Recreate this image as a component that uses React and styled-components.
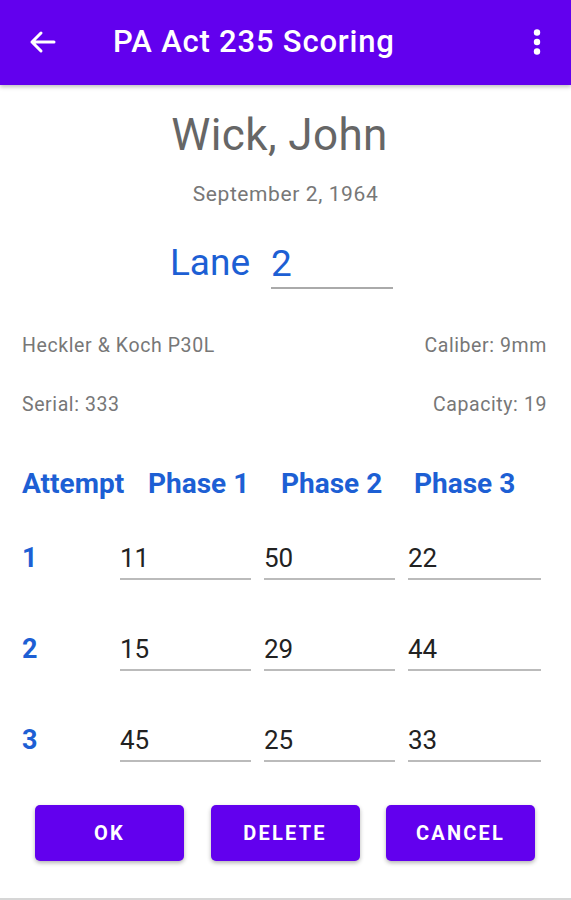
import React from 'react'
import styled, { createGlobalStyle } from 'styled-components'

const GlobalStyle = createGlobalStyle`
  * { box-sizing: border-box; }
  body {
    margin: 0;
    background: #fff;
    font-family: Roboto, "Liberation Sans", sans-serif;
  }
`

const PURPLE = '#6200ee'
const BLUE = '#1d5fd4'

const scores = [
  { attempt: 1, values: ['11', '50', '22'] },
  { attempt: 2, values: ['15', '29', '44'] },
  { attempt: 3, values: ['45', '25', '33'] },
]

function App() {
  return (
    <Screen>
      <GlobalStyle />
      <AppBar>
        <IconButton aria-label="back">
          <svg width="28" height="24" viewBox="0 0 28 24">
            <path d="M26 12H4M13 3l-9 9 9 9" fill="none" stroke="#fff" strokeWidth="3" strokeLinecap="round" strokeLinejoin="round" />
          </svg>
        </IconButton>
        <Title>PA Act 235 Scoring</Title>
        <Kebab aria-label="menu">
          <svg width="8" height="26" viewBox="0 0 8 26">
            <circle cx="4" cy="3.5" r="3.2" fill="#fff" />
            <circle cx="4" cy="13" r="3.2" fill="#fff" />
            <circle cx="4" cy="22.5" r="3.2" fill="#fff" />
          </svg>
        </Kebab>
      </AppBar>

      <Content>
        <Name>Wick, John</Name>
        <Birth>September 2, 1964</Birth>

        <LaneRow>
          <LaneLabel>Lane</LaneLabel>
          <LaneInput defaultValue="2" />
        </LaneRow>

        <InfoRow $top={45}>
          <span>Heckler &amp; Koch P30L</span>
          <span>Caliber: 9mm</span>
        </InfoRow>
        <InfoRow $top={35}>
          <span>Serial: 333</span>
          <span>Capacity: 19</span>
        </InfoRow>

        <HeadRow>
          <Head>Attempt</Head>
          <Head>Phase 1</Head>
          <Head>Phase 2</Head>
          <Head>Phase 3</Head>
        </HeadRow>

        <ScoreTable>
          {scores.map(row => (
            <ScoreRow key={row.attempt}>
              <AttemptNo>{row.attempt}</AttemptNo>
              {row.values.map((v, i) => (
                <ScoreInput key={i} defaultValue={v} />
              ))}
            </ScoreRow>
          ))}
        </ScoreTable>

        <Buttons>
          <Button>OK</Button>
          <Button>DELETE</Button>
          <Button>CANCEL</Button>
        </Buttons>
      </Content>
      <BottomEdge />
    </Screen>
  )
}

const Screen = styled.div`
  width: 571px;
  height: 900px;
  display: flex;
  flex-direction: column;
  overflow: hidden;
`

const AppBar = styled.header`
  height: 85px;
  flex-shrink: 0;
  background: ${PURPLE};
  display: flex;
  align-items: center;
  padding: 0 0 2px 28px;
  box-shadow: 0 2px 4px rgba(0, 0, 0, 0.25);
  position: relative;
  z-index: 1;
`

const IconButton = styled.div`
  width: 28px;
  height: 24px;
  display: flex;
`

const Title = styled.h1`
  margin: 0 0 0 57px;
  flex: 1;
  color: #fff;
  font-size: 31px;
  font-weight: 500;
  letter-spacing: 0.8px;
  line-height: 34px;
`

const Kebab = styled.div`
  width: 8px;
  height: 26px;
  display: flex;
  margin-right: 30px;
`

const Content = styled.main`
  flex: 1;
  display: flex;
  flex-direction: column;
`

const Name = styled.div`
  margin-top: 25px;
  text-align: center;
  padding-right: 12px;
  font-size: 44px;
  letter-spacing: 0.4px;
  line-height: 50px;
  color: #666;
`

const Birth = styled.div`
  margin-top: 22px;
  text-align: center;
  font-size: 21px;
  letter-spacing: 0.6px;
  line-height: 24px;
  color: #777;
`

const LaneRow = styled.div`
  margin-top: 32px;
  display: flex;
  justify-content: center;
  align-items: flex-end;
  gap: 21px;
  padding-right: 8px;
`

const LaneLabel = styled.span`
  font-size: 37px;
  line-height: 50px;
  padding-bottom: 1px;
  color: ${BLUE};
`

const LaneInput = styled.input`
  width: 122px;
  height: 50px;
  border: none;
  border-bottom: 2px solid #aaa;
  padding: 0;
  outline: none;
  background: transparent;
  font-family: Roboto, "Liberation Sans", sans-serif;
  font-size: 37px;
  color: ${BLUE};
`

const InfoRow = styled.div`
  margin-top: ${p => p.$top}px;
  padding: 0 24px 0 22px;
  display: flex;
  justify-content: space-between;
  font-size: 19.5px;
  letter-spacing: 0.6px;
  line-height: 24px;
  color: #777;
`

const HeadRow = styled.div`
  margin-top: 52px;
  padding-left: 22px;
  display: grid;
  grid-template-columns: 126px 133px 133px auto;
`

const Head = styled.div`
  font-size: 28px;
  font-weight: 700;
  line-height: 30px;
  color: ${BLUE};
`

const ScoreTable = styled.div`
  margin-top: 31px;
  display: flex;
  flex-direction: column;
  gap: 41px;
`

const ScoreRow = styled.div`
  padding-left: 22px;
  display: grid;
  grid-template-columns: 85px 131px 131px 133px;
  column-gap: 13px;
`

const AttemptNo = styled.div`
  padding-top: 8px;
  font-size: 27px;
  font-weight: 700;
  line-height: 40px;
  color: ${BLUE};
`

const ScoreInput = styled.input`
  width: 100%;
  height: 50px;
  border: none;
  border-bottom: 2px solid #bbb;
  padding: 8px 0 0 0;
  outline: none;
  background: transparent;
  font-family: Roboto, "Liberation Sans", sans-serif;
  font-size: 26px;
  color: #222;
`

const Buttons = styled.div`
  margin-top: 43px;
  padding: 0 36px 0 35px;
  display: flex;
  justify-content: space-between;
`

const Button = styled.button`
  width: 149px;
  height: 56px;
  border: none;
  border-radius: 5px;
  background: ${PURPLE};
  color: #fff;
  font-family: Roboto, "Liberation Sans", sans-serif;
  font-size: 20px;
  font-weight: 700;
  letter-spacing: 2.2px;
  box-shadow: 0 2px 4px rgba(0, 0, 0, 0.3);
`

const BottomEdge = styled.div`
  height: 2px;
  background: #d6d6d6;
`

export default App
